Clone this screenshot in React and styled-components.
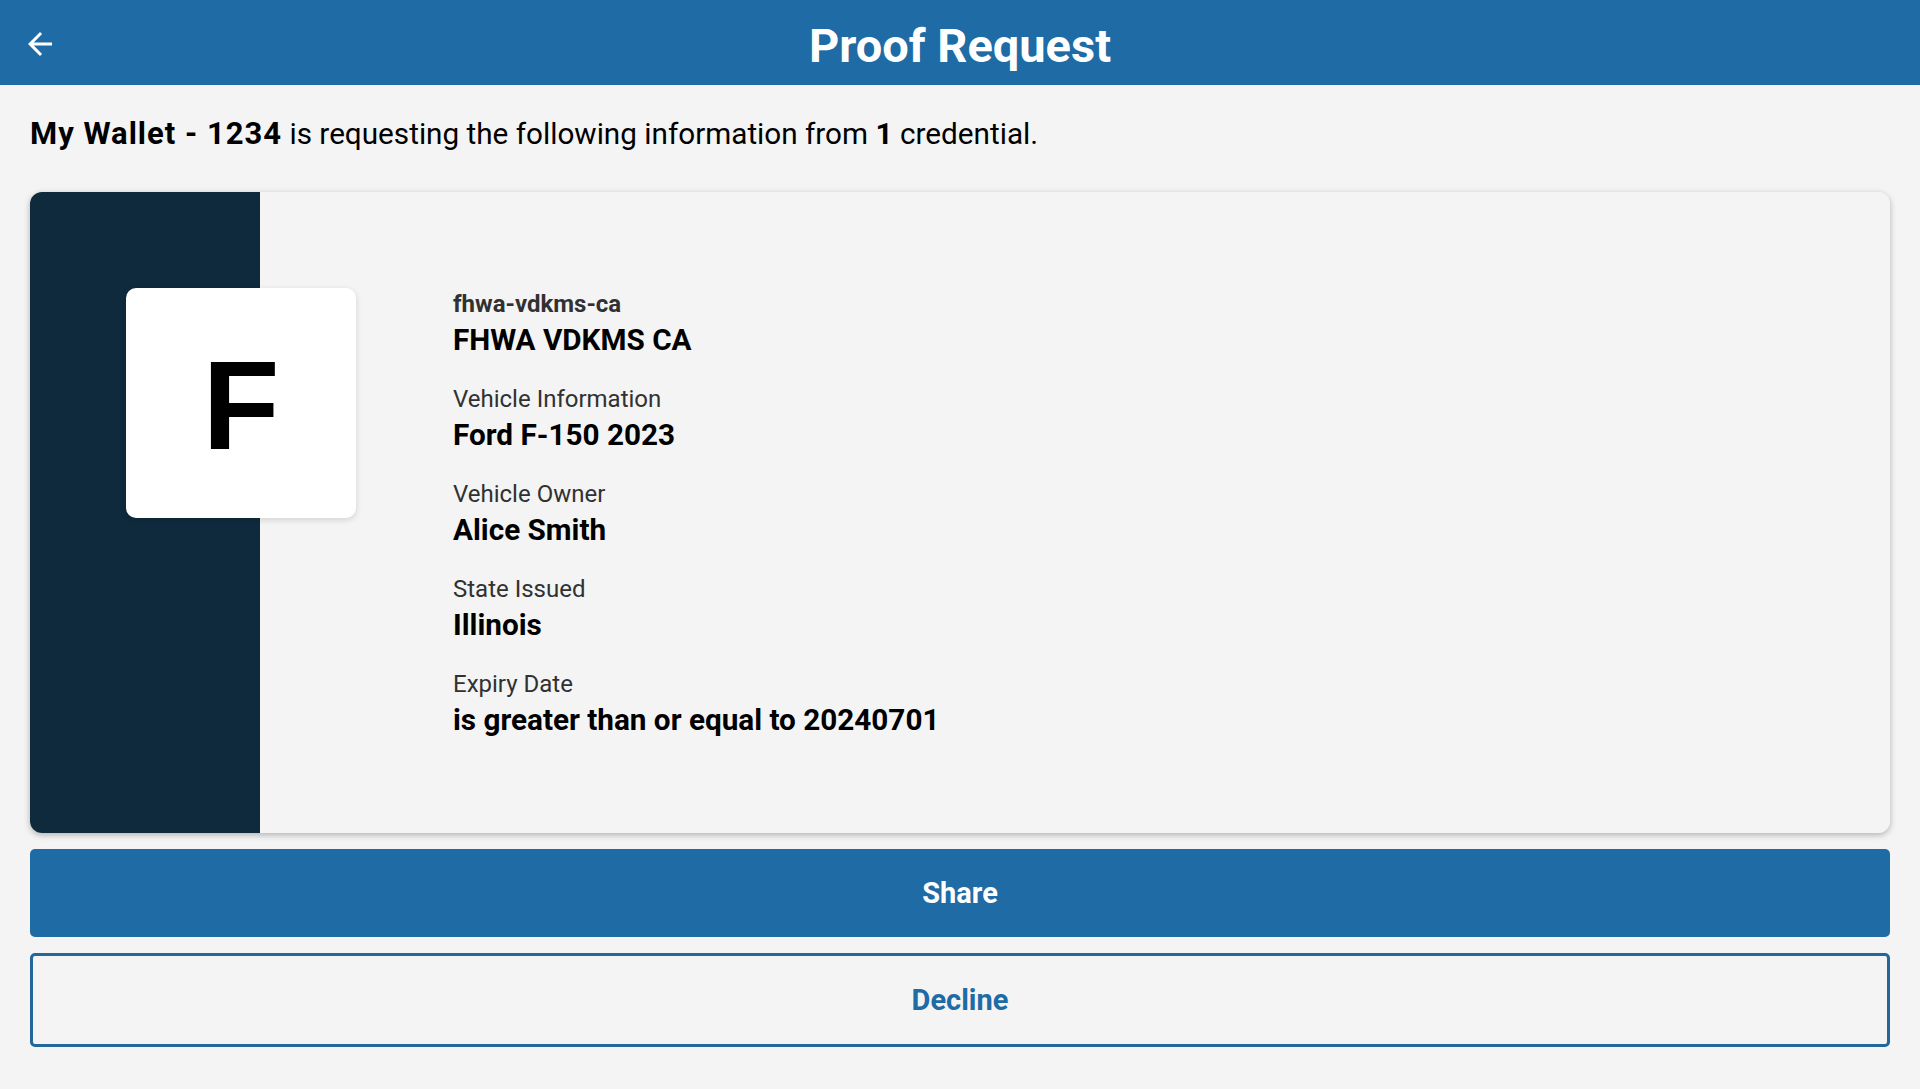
import React from "react";
import styled, { createGlobalStyle } from "styled-components";

const GlobalStyle = createGlobalStyle`
    * {
        box-sizing: border-box;
    }
    body {
        margin: 0;
        background: #f4f4f4;
        font-family: Roboto, "Noto Sans", sans-serif;
        color: #000;
    }
`;

const Page = styled.div`
    min-height: 1089px;
    background: #f4f4f4;
`;

const Header = styled.header`
    height: 85px;
    background: #1e6ba5;
    display: grid;
    grid-template-columns: 120px 1fr 120px;
    align-items: center;
`;

const BackButton = styled.button`
    width: 48px;
    height: 48px;
    margin-left: 16px;
    padding: 0;
    border: none;
    background: transparent;
    display: flex;
    align-items: center;
    justify-content: center;
    cursor: pointer;
    margin-top: 3px;
`;

const Title = styled.h1`
    margin: 0;
    padding-top: 6px;
    text-align: center;
    color: #fff;
    font-size: 47px;
    font-weight: 700;
    line-height: 54px;
`;

const Content = styled.main`
    padding: 0 30px;
`;

const Intro = styled.p`
    margin: 31px 0 0;
    font-size: 29.7px;
    line-height: 36px;
    color: #000;
`;

const Strong = styled.b`
    font-size: ${(p) => (p.$wide ? "31px" : "30px")};
    font-weight: 700;
    letter-spacing: ${(p) => (p.$wide ? "1px" : "0")};
`;

const Card = styled.section`
    margin-top: 40px;
    display: flex;
    align-items: flex-start;
    padding: 96px 0 95px;
    border-radius: 12px;
    background: linear-gradient(90deg, #0e2a3c 230px, #f4f4f4 230px);
    box-shadow: 0 2px 6px rgba(0, 0, 0, 0.28);
`;

const Logo = styled.div`
    flex: none;
    width: 230px;
    height: 230px;
    margin-left: 96px;
    border-radius: 10px;
    background: #fff;
    box-shadow: 0 2px 6px rgba(0, 0, 0, 0.14);
    display: flex;
    align-items: center;
    justify-content: center;
    font-family: "Liberation Sans", Arial, sans-serif;
    font-weight: 700;
    font-size: 126px;
    line-height: 1;
    padding-top: 6px;
`;

const Fields = styled.div`
    margin-left: 97px;
    padding-top: 2px;
    display: flex;
    flex-direction: column;
    gap: 27px;
`;

const Field = styled.div`
    display: flex;
    flex-direction: column;
    gap: 4px;
`;

const Label = styled.div`
    font-size: 24px;
    line-height: 28px;
    color: #313132;
    font-weight: ${(p) => (p.$strong ? 700 : 400)};
`;

const Value = styled.div`
    font-size: 29.7px;
    line-height: 36px;
    font-weight: 700;
    color: #000;
`;

const Actions = styled.div`
    margin-top: 16px;
    display: flex;
    flex-direction: column;
    gap: 16px;
`;

const Button = styled.button`
    width: 100%;
    height: ${(p) => (p.$outline ? "94px" : "88px")};
    border-radius: 5px;
    border: ${(p) => (p.$outline ? "3px solid #23679b" : "none")};
    background: ${(p) => (p.$outline ? "transparent" : "#1e6ba5")};
    color: ${(p) => (p.$outline ? "#1e6ba5" : "#fff")};
    font-family: Roboto, sans-serif;
    font-size: 29px;
    font-weight: 700;
    cursor: pointer;
`;

const fields = [
    { label: "fhwa-vdkms-ca", value: "FHWA VDKMS CA", strong: true },
    { label: "Vehicle Information", value: "Ford F-150 2023" },
    { label: "Vehicle Owner", value: "Alice Smith" },
    { label: "State Issued", value: "Illinois" },
    { label: "Expiry Date", value: "is greater than or equal to 20240701" },
];

const App = () => {
    return (
        <Page>
            <GlobalStyle />
            <Header>
                <BackButton aria-label="Back">
                    <svg width="36" height="36" viewBox="0 0 24 24" fill="#fff">
                        <path d="M20 11H7.83l5.59-5.59L12 4l-8 8 8 8 1.41-1.41L7.83 13H20v-2z" />
                    </svg>
                </BackButton>
                <Title>Proof Request</Title>
                <span />
            </Header>
            <Content>
                <Intro>
                    <Strong $wide>My Wallet - 1234</Strong> is requesting the following information from <Strong>1</Strong> credential.
                </Intro>
                <Card>
                    <Logo>F</Logo>
                    <Fields>
                        {fields.map((f) => (
                            <Field key={f.label}>
                                <Label $strong={f.strong}>{f.label}</Label>
                                <Value>{f.value}</Value>
                            </Field>
                        ))}
                    </Fields>
                </Card>
                <Actions>
                    <Button>Share</Button>
                    <Button $outline>Decline</Button>
                </Actions>
            </Content>
        </Page>
    );
};

export default App;
